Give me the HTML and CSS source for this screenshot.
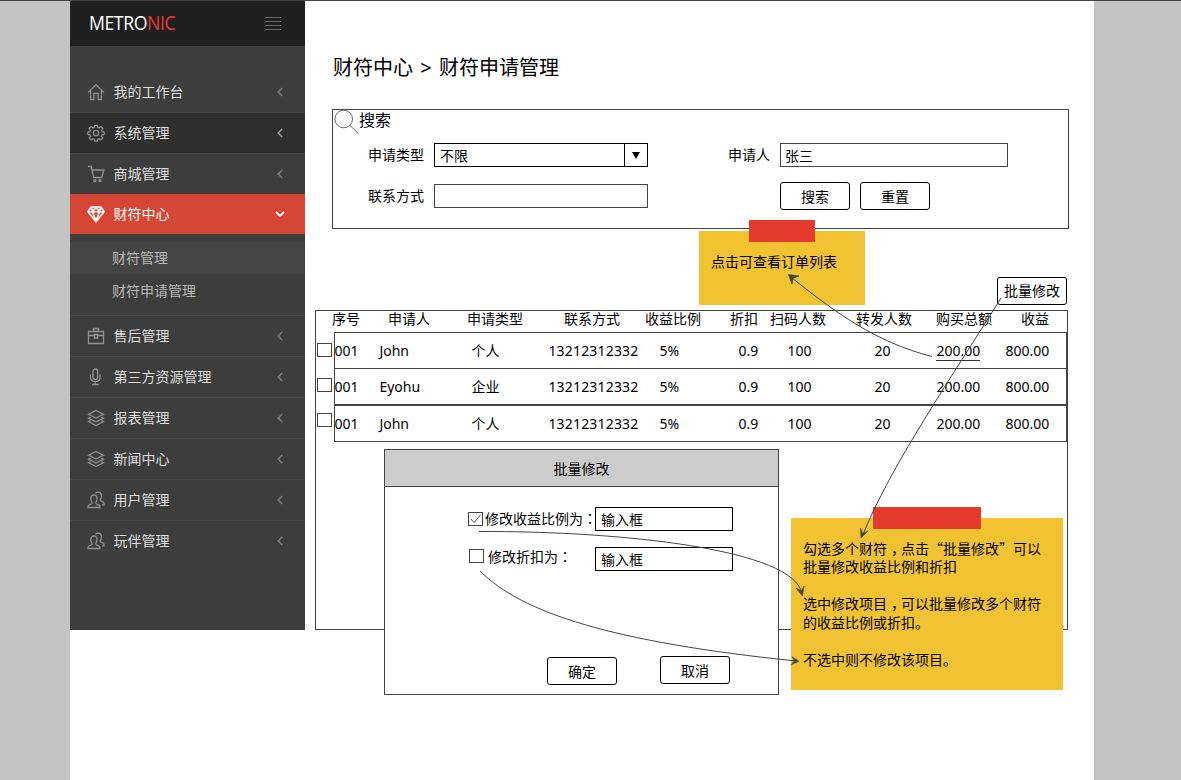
FILE: index.html
```html
<!DOCTYPE html>
<html lang="zh-CN">
<head>
<meta charset="utf-8">
<title>财符申请管理</title>
<link rel="stylesheet" href="styles.css">
</head>
<body>
<svg class="defs" width="0" height="0">
  <symbol id="chev" viewBox="0 0 6 10"><path d="M5.2 1L1.2 5l4 4"/></symbol>
  <symbol id="layers" viewBox="0 0 18 18"><path d="M9 1.500l7.500 3.800L9 9.100 1.500 5.300zM3.600 8.100L1.500 9.200 9 13l7.500-3.800-2.100-1.100M3.600 11.700l-2.100 1.100L9 16.600l7.500-3.800-2.100-1.100"/></symbol>
  <symbol id="users" viewBox="0 0 18 18"><path d="M1 16.500c0-2.600.8-2.700 3.400-3.600.8-.4.700-1.500.2-2.200C3.400 9.100 3.100 3.900 6.900 3.800c3.900.1 3.500 5.300 2.300 6.900-.5.700-.6 1.800.2 2.200 2.600.9 3.500 1 3.500 3.600zM8.400 2.300c.8-1 1.800-1.200 2.900-1.200 4 .2 3.400 5.200 2.400 6.700-.5.800-.6 1.800.2 2.200 2.300.9 3.200 1.200 3.200 3.800h-2"/></symbol>
</svg>
<div class="page">
  <aside class="sidebar">
    <header class="brand">
      <div class="logo">METRO<span>NIC</span></div>
      <div class="burger"><i></i><i></i><i></i><i></i></div>
    </header>
    <nav class="menu">
      <a class="item"><svg class="ico" viewBox="0 0 18 18"><path d="M1 9.600L9 1.700l8 7.900M3.500 7.500v9h3.300v-6.200h4.400v6.200h3.300v-9"/></svg><span>我的工作台</span><svg class="chev"><use href="#chev"/></svg></a>
      <a class="item dark"><svg class="ico" viewBox="0 0 18 18"><circle cx="9" cy="9" r="2.700"/><path d="M7.700 1.300h2.600l.5 2.100 1.200.5 1.900-1.200 1.900 1.900-1.200 1.900.5 1.200 2 .4v2.300l-2.100.5-.5 1.200 1.300 1.900-1.900 1.900-1.900-1.200-1.200.5-.5 2H7.700l-.5-2-1.200-.5-1.900 1.200-1.900-1.900 1.200-1.900-.5-1.200-2-.5V8.100l2-.4.5-1.200-1.200-1.900 1.900-1.900L6 3.900l1.200-.5z"/></svg><span>系统管理</span><svg class="chev lit"><use href="#chev"/></svg></a>
      <a class="item"><svg class="ico" viewBox="0 0 18 18"><path d="M1 1.500h3.200l2.500 11h8.100l2-7.500H5"/><circle cx="7.800" cy="15.700" r="1"/><circle cx="13" cy="15.700" r="1"/></svg><span>商城管理</span><svg class="chev"><use href="#chev"/></svg></a>
      <a class="item active"><svg class="ico" viewBox="0 0 18 18"><path d="M4.200 2h9.600l3.400 4.700L9 16.500.8 6.700zM.8 6.700h16.400M5.500 6.700L9 16l3.500-9.300L9 2.200zM4.200 2l1.300 4.700M13.800 2l-1.300 4.700"/></svg><span>财符中心</span><svg class="down" viewBox="0 0 10 6"><path d="M1 1l4 3.800L9 1"/></svg></a>
      <div class="sub">
        <a class="on">财符管理</a>
        <a>财符申请管理</a>
      </div>
      <a class="item"><svg class="ico" viewBox="0 0 18 18"><path d="M1.500 4.500h15v12h-15zM6.500 4.500v-3h5v3M1.500 8.500h6M10.500 8.500h6M7.500 7.500h3v3.500h-3z"/></svg><span>售后管理</span><svg class="chev"><use href="#chev"/></svg></a>
      <a class="item"><svg class="ico" viewBox="0 0 18 18"><rect x="6" y="1" width="4.600" height="10.500" rx="2.300"/><path d="M3.500 6.500v2.700c0 5.700 9.600 5.700 9.600 0V6.500M8.300 13.600v2.900M5 16.500h6.800"/></svg><span>第三方资源管理</span><svg class="chev"><use href="#chev"/></svg></a>
      <a class="item"><svg class="ico"><use href="#layers"/></svg><span>报表管理</span><svg class="chev"><use href="#chev"/></svg></a>
      <a class="item"><svg class="ico"><use href="#layers"/></svg><span>新闻中心</span><svg class="chev"><use href="#chev"/></svg></a>
      <a class="item"><svg class="ico"><use href="#users"/></svg><span>用户管理</span><svg class="chev"><use href="#chev"/></svg></a>
      <a class="item last"><svg class="ico"><use href="#users"/></svg><span>玩伴管理</span><svg class="chev"><use href="#chev"/></svg></a>
    </nav>
  </aside>

  <main class="main">
    <h1>财符中心<b>&gt;</b>财符申请管理</h1>

    <section class="search">
      <div class="search-title">
        <svg viewBox="0 0 25 25"><circle cx="9.700" cy="9" r="8.800"/><path d="M16 15.500l8 7.800"/></svg>
        <span>搜索</span>
      </div>
      <div class="form">
        <label>申请类型</label>
        <div class="field short select"><span>不限</span><i><svg viewBox="0 0 8 7"><path d="M0 0h8L4 7z"/></svg></i></div>
        <label>申请人</label>
        <div class="field name">张三</div>
        <label>联系方式</label>
        <div class="field short"></div>
        <div class="actions"><button>搜索</button><button>重置</button></div>
      </div>
    </section>

    <div class="toolbar"><button>批量修改</button></div>

    <section class="list">
      <div class="head"><span>序号</span><span>申请人</span><span>申请类型</span><span>联系方式</span><span>收益比例</span><span>折扣</span><span>扫码人数</span><span>转发人数</span><span>购买总额</span><span>收益</span></div>
      <div class="line"><i class="box"></i>
        <div class="row"><span>001</span><span>John</span><span>个人</span><span>13212312332</span><span>5%</span><span>0.9</span><span>100</span><span>20</span><span><u>200.00</u></span><span>800.00</span></div></div>
      <div class="line second"><i class="box"></i>
        <div class="row"><span>001</span><span>Eyohu</span><span>企业</span><span>13212312332</span><span>5%</span><span>0.9</span><span>100</span><span>20</span><span>200.00</span><span>800.00</span></div></div>
      <div class="line third"><i class="box"></i>
        <div class="row"><span>001</span><span>John</span><span>个人</span><span>13212312332</span><span>5%</span><span>0.9</span><span>100</span><span>20</span><span>200.00</span><span>800.00</span></div></div>
    </section>
  </main>

  <div class="modal">
    <div class="modal-title">批量修改</div>
    <div class="option"><i class="box"><svg viewBox="0 0 13 13"><path d="M1.500 6.500l3.500 4 6.800-8.500"/></svg></i><span>修改收益比例为<em lang="zh-TW">：</em></span><div class="field">输入框</div></div>
    <div class="option next"><i class="box"></i><span>修改折扣为<em lang="zh-TW">：</em></span><div class="field">输入框</div></div>
    <div class="modal-actions"><button>确定</button><button>取消</button></div>
  </div>

  <div class="note note-order"><i class="tape"></i><p>点击可查看订单列表</p></div>
  <div class="note note-batch"><i class="tape"></i>
    <p>勾选多个财符<em>，</em>点击<q>“</q>批量修改<q>”</q>可以<br>批量修改收益比例和折扣</p>
    <p>选中修改项目<em>，</em>可以批量修改多个财符<br>的收益比例或折扣。</p>
    <p>不选中则不修改该项目。</p>
  </div>

  <svg class="arrows" width="1181" height="780" viewBox="0 0 1181 780">
    <path d="M932 356.500C875 342 835 312 792 278"/>
    <path d="M1001 298C955 372 889 468 862 537"/>
    <path d="M479 531.500C620 531 795 549 802 594"/>
    <path d="M480 571C522 613 612 642 796 661"/>
    <g>
      <path d="M788.500 274.500l10.500 1.500-6 2.200-1 6z"/>
      <path d="M861 538l-.5-9.500 2.200 5.200 5.300-2.700z"/>
      <path d="M802.500 596l-6.500-8 5.300 3 2.700-5z"/>
      <path d="M799 661.300l-8 3.500 3.500-4-2.500-4z"/>
    </g>
  </svg>
</div>
</body>
</html>
```
FILE: styles.css
```css
* { box-sizing: border-box; }
body {
  margin: 0;
  background: #c4c4c4;
  font: 14px/20px "Noto Sans", "Noto Sans CJK SC", sans-serif;
  color: #000;
}
h1, p { margin: 0; font-weight: 400; }
i, em { font-style: normal; }
svg { fill: none; display: block; overflow: visible; }
.defs { position: absolute; }

.page {
  position: relative;
  display: flex;
  align-items: flex-start;
  height: 780px;
  padding: 0 87px 0 70px;
  border-top: 1px solid #444;
  background: linear-gradient(#fff, #fff) 70px 0 / 1024px 100% no-repeat;
  overflow: hidden;
}

/* Sidebar */
.sidebar { width: 235px; height: 629px; background: #3d3d3d; flex: none; }
.brand {
  height: 45px;
  padding: 0 24px 0 19px;
  background: #1f1f1f;
  display: flex;
  align-items: center;
  justify-content: space-between;
}
.logo {
  width: 90px;
  padding-bottom: 2px;
  font: 400 20px/42px "Open Sans", "Noto Sans", sans-serif;
  color: #fff;
  letter-spacing: -.5px;
  white-space: nowrap;
  transform: scaleX(.885);
  transform-origin: left;
}
.logo span { color: #e8383a; }
.burger { width: 16px; display: grid; gap: 3px; }
.burger i { height: 1px; background: #666; }
.menu { padding-top: 26px; }
.item {
  height: 41px;
  border-bottom: 1px solid #484848;
  display: flex;
  align-items: center;
  padding: 0 21px 0 17px;
  color: #ddd;
}
.item span { margin-left: 8.500px; flex: 1; }
.ico { width: 18px; height: 18px; stroke: #8f9292; stroke-width: 1.300; }
.chev { width: 6px; height: 10px; stroke: #808080; stroke-width: 1.400; margin-right: 1px; }
.chev.lit { stroke: #a0a0a0; }
.dark { background: #2f2f2f; }
.active { height: 40px; margin-top: -1px; border: 0; background: #d64635; color: #fff; padding-right: 20px; position: relative; }
.active .ico { stroke: #fff; stroke-width: 1.500; }
.down { width: 10px; height: 6px; stroke: #fff; stroke-width: 1.800; }
.sub { height: 82px; padding-top: 8px; border-bottom: 1px solid #484848; }
.sub a { display: flex; align-items: center; height: 32px; padding-left: 42px; color: #b8b8b8; }
.sub a + a { height: 34px; }
.sub .on { background: #454545; }
.last { border: 0; height: 40px; }

/* Main column */
.main { width: 789px; padding-left: 10px; }
h1 { margin: 54px 0 0 18px; font-size: 20px; line-height: 26px; }
h1 b { font-weight: 400; display: inline-block; width: 26px; text-align: center; }
.search {
  width: 737px;
  height: 120px;
  margin: 28px 0 0 17px;
  border: 1px solid #444;
}
.search-title { display: flex; height: 33px; padding-left: 1px; font-size: 16px; }
.search-title svg { width: 25px; height: 25px; stroke: #555; stroke-width: .9; }
.form {
  display: grid;
  grid-template: 24px 24px / 56px 284px 42px 228px;
  gap: 17px 10px;
  padding-left: 35px;
  align-items: center;
}
.form .field { height: 24px; }
.form .short { width: 214px; }
.field {
  border: 1px solid #444;
  background: #fff;
  padding-left: 5px;
  line-height: 24px;
}
.form .name { padding-left: 4px; }
.select { display: flex; border-color: #000; }
.select span { flex: 1; }
.select i { width: 23px; border-left: 1px solid #000; display: grid; place-items: center; }
.select svg { width: 8px; height: 7px; fill: #000; }
.actions { grid-column: 4; display: flex; gap: 10px; }
button {
  width: 70px;
  height: 28px;
  padding: 0;
  border: 1px solid #000;
  border-radius: 3px;
  background: #fff;
  color: #000;
  font: inherit;
  line-height: 27px;
  white-space: nowrap;
}
.toolbar { display: flex; justify-content: flex-end; padding: 48px 27px 0 0; }
.list { width: 753px; height: 320px; margin-top: 5px; border: 1px solid #444; }
.head {
  display: grid;
  grid-template-columns: 56px 79px 97px 81px 85px 40px 86px 80px 85px 1fr;
  height: 21px;
  padding-left: 16px;
  line-height: 16px;
  white-space: nowrap;
}
.line { display: flex; gap: 2px; padding-left: 1px; }
.box { width: 15px; height: 14px; border: 1px solid #444; background: #fff; flex: none; margin-top: 11px; }
.row {
  flex: 1;
  height: 37px;
  display: grid;
  grid-template-columns: 45px 92px 77px 111px 79px 49px 87px 62px 69px 1fr;
  border: 1px solid #444;
  line-height: 36px;
}
.row span { margin-left: -.6px; white-space: nowrap; }
.row span:nth-child(4) { letter-spacing: .18px; }
.row u { text-decoration: none; border-bottom: 1px solid #333; }
.second .row { margin-top: -1px; }
.second .box { margin-top: 9px; }
.third .box { margin-top: 8px; }

/* Dialog */
.modal {
  position: absolute;
  left: 384px;
  top: 448px;
  width: 395px;
  height: 246px;
  border: 1px solid #444;
  background: #fff;
}
.modal-title { height: 37px; background: #ccc; border-bottom: 1px solid #444; text-align: center; line-height: 38px; }
.option { display: flex; align-items: center; padding: 20px 45px 0 83px; }
.option .box { margin: -1px 0 0; }
.option .box svg { width: 13px; height: 12px; stroke: #333; }
.option span { margin: -2px 0 0 2px; flex: 1; width: 0; white-space: nowrap; }
.option em { font-family: "Noto Sans CJK TC", sans-serif; }
.option .field { width: 138px; height: 24px; border-color: #000; flex: none; }
.next { padding: 16px 45px 0 84px; }
.next .box { margin-top: -6px; }
.next span { margin: -5px 0 0 4px; }
.modal-actions { display: flex; gap: 43px; padding: 85px 0 0 162px; }
.modal-actions button:first-child { margin-top: 1px; }
.toolbar button { line-height: 26px; }

/* Sticky notes */
.note { position: absolute; background: #f1c232; padding-left: 12px; white-space: nowrap; }
.tape { position: absolute; top: -11px; height: 22px; background: #e53b2e; }
.note-order { left: 699px; top: 230px; width: 166px; height: 74px; padding-top: 21px; }
.note-order .tape { left: 50px; width: 66px; }
.note-batch { left: 791px; top: 517px; width: 272px; height: 172px; padding-top: 21.900px; line-height: 18.500px; }
.note-batch .tape { left: 82px; width: 108px; }
.note-batch p + p { margin-top: 18.500px; }
.note em { padding-left: 4px; letter-spacing: -4px; }
.note q { quotes: none; font-family: "Noto Sans CJK SC", sans-serif; line-height: 0; }
.arrows { position: absolute; left: 0; top: -1px; stroke: #444; stroke-width: 1; pointer-events: none; }
.arrows g { fill: #444; stroke-width: .7; }
```
